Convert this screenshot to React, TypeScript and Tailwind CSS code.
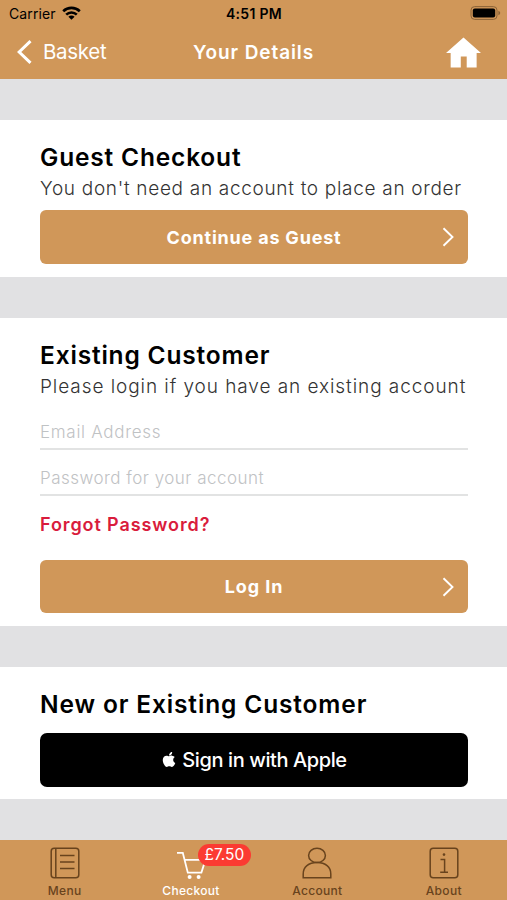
import React from 'react';
import { FaApple } from 'react-icons/fa';

function Chevron() {
  return (
    <svg className="absolute right-[14px] top-[17px] h-5 w-3" viewBox="0 0 12 20" fill="none" stroke="white" strokeWidth="1.9">
      <path d="M1.5 1.2 L10.5 10 L1.5 18.8" />
    </svg>
  );
}

function StatusBar() {
  return (
    <div className="relative flex h-[27px] items-center justify-between pl-[9px] pr-[6px] text-black">
      <div className="flex items-center gap-[6px]">
        <span className="text-[14px] tracking-[0.1px]">Carrier</span>
        <svg className="-mt-[2px] h-[14px] w-[19px]" viewBox="0 0 19 14" fill="none" stroke="black" strokeWidth="2.6">
          <path d="M1.2 5.2 C5.8 0.7 13.2 0.7 17.8 5.2" />
          <path d="M4.2 8.6 C7.2 5.7 11.8 5.7 14.8 8.6" />
          <path d="M9.5 13.8 L6.4 10.7 C8.1 9.1 10.9 9.1 12.6 10.7 Z" fill="black" stroke="none" />
        </svg>
      </div>
      <span className="absolute inset-x-0 pl-px text-center text-[14px] font-semibold tracking-[0.3px]">4:51 PM</span>
      <svg className="-mt-px h-[14px] w-[31px]" viewBox="0 0 31 14">
        <rect x="1" y="0.6" width="26" height="12.8" rx="3.6" fill="none" stroke="#8a6338" strokeWidth="1" />
        <rect x="2.8" y="2.4" width="22.4" height="9.2" rx="2" fill="black" />
        <path d="M28.4 4.8 C30.8 5.6 30.8 8.4 28.4 9.2 Z" fill="#8a6338" />
      </svg>
    </div>
  );
}

function Header() {
  return (
    <header className="h-[79px] shrink-0 bg-[#d09759]">
      <StatusBar />
      <div className="relative flex h-[50px] items-center justify-between pl-4 pr-[26px] text-white">
        <div className="flex items-center gap-[11px]">
          <svg className="h-6 w-4" viewBox="0 0 16 24" fill="none" stroke="white" strokeWidth="3">
            <path d="M14.5 1.2 L3.2 12 L14.5 22.8" />
          </svg>
          <span className="text-[20.5px] tracking-[-0.3px]">Basket</span>
        </div>
        <h1 className="absolute inset-x-0 top-[11px] text-center text-[19px] leading-[30px] font-semibold tracking-[0.9px]">Your Details</h1>
        <svg className="h-[31px] w-[35px]" viewBox="0 0 36 31" fill="white">
          <path d="M18 0 L36 16 H31.5 V31 H21.3 V19.5 H15.2 V31 H4.8 V16 H0 Z" />
        </svg>
      </div>
    </header>
  );
}

function Tab({ label, active, children }: { label: string; active?: boolean; children: React.ReactNode }) {
  return (
    <div className={active ? 'relative flex flex-col items-center text-white' : 'relative flex flex-col items-center text-[#68431d]'}>
      <svg className="mt-[7px] h-8 w-[30px]" viewBox="0 0 30 32" fill="none" stroke="currentColor" strokeWidth="1.5">
        {children}
      </svg>
      <span className="mt-[3px] text-[12px] leading-[18px] font-medium tracking-[0.3px]">{label}</span>
      {active && (
        <span className="absolute left-[70px] top-[4px] flex h-[22px] w-[53px] items-center justify-center rounded-full bg-[#fb3b32] text-[15.5px] text-white">
          £7.50
        </span>
      )}
    </div>
  );
}

export default function App() {
  return (
    <div className="flex h-[900px] w-[507px] flex-col overflow-hidden bg-[#e1e1e3] font-['Inter',sans-serif] whitespace-nowrap">
      <Header />

      <main className="flex flex-1 flex-col gap-[41px] pt-[41px]">
        {/* Guest checkout */}
        <section className="h-[157px] bg-white px-10 pt-[22px]">
          <h2 className="text-[24.5px] leading-[30px] font-semibold tracking-[0.82px]">Guest Checkout</h2>
          <p className="mt-[5px] text-[19px] leading-6 font-light tracking-[0.69px] text-[#333]">You don't need an account to place an order</p>
          <button className="relative mt-[9px] block h-[54px] w-[428px] rounded-[6px] bg-[#d09759] text-[18px] font-bold tracking-[0.8px] text-white">
            Continue as Guest
            <Chevron />
          </button>
        </section>

        {/* Login form */}
        <section className="h-[308px] bg-white px-10 pt-[22px]">
          <h2 className="text-[24.5px] leading-[30px] font-semibold tracking-[0.82px]">Existing Customer</h2>
          <p className="mt-[5px] text-[19px] leading-6 font-light tracking-[0.93px] text-[#333]">Please login if you have an existing account</p>
          <input
            className="mt-[17px] block h-[34px] w-[428px] border-b-2 border-[#e2e3e3] text-[17px] font-light tracking-[0.7px] outline-none placeholder:text-[#bfc2c4]"
            placeholder="Email Address"
          />
          <input
            className="mt-[12px] block h-[34px] w-[428px] border-b-2 border-[#e2e3e3] text-[17px] font-light tracking-[0.48px] outline-none placeholder:text-[#bfc2c4]"
            placeholder="Password for your account"
          />
          <a className="mt-[17px] block text-[18px] leading-6 font-semibold tracking-[0.9px] text-[#d91c3c]">Forgot Password?</a>
          <button className="relative mt-[23px] block h-[53px] w-[428px] rounded-[6px] bg-[#d09759] text-[18px] font-bold tracking-[0.9px] text-white">
            Log In
            <Chevron />
          </button>
        </section>

        {/* Apple sign in */}
        <section className="h-[132px] bg-white px-10 pt-[22px]">
          <h2 className="text-[24.5px] leading-[30px] font-semibold tracking-[0.86px]">New or Existing Customer</h2>
          <button className="mt-[14px] flex h-[54px] w-[428px] items-center justify-center gap-[5px] rounded-[7px] bg-black text-[20px] font-medium tracking-[-0.4px] text-white">
            <FaApple className="-mt-px h-[17px] w-[16px]" />
            Sign in with Apple
          </button>
        </section>
      </main>

      <nav className="grid h-[60px] shrink-0 grid-cols-4 bg-[#d09759] pl-[1.5px]">
        <Tab label="Menu">
          <rect x="1.2" y="1.2" width="27.6" height="29.6" rx="3" />
          <path d="M5.8 1.2 V30.8 M10 8.5 H24.5 M10 15 H24.5 M10 21.5 H24.5" />
        </Tab>
        <Tab label="Checkout" active>
          <path d="M1 5.8 H6.8 L11.8 25.6 H25.4 L29.5 12.8 H8.6" strokeWidth="1.8" />
          <circle cx="13.6" cy="30" r="2" fill="currentColor" stroke="none" />
          <circle cx="22.6" cy="30" r="2" fill="currentColor" stroke="none" />
        </Tab>
        <Tab label="Account">
          <ellipse cx="15" cy="8.4" rx="8.4" ry="7.2" />
          <path d="M1.2 30.8 V27 C1.2 20 6.5 15.6 15 15.6 C23.5 15.6 28.8 20 28.8 27 V30.8 Z" />
        </Tab>
        <Tab label="About">
          <rect x="1.2" y="1.2" width="27.6" height="29.6" rx="3" />
          <path d="M11.5 12.5 H15.6 V25.2 M11.2 25.2 H19" />
          <circle cx="15" cy="7.6" r="1.3" fill="currentColor" stroke="none" />
        </Tab>
      </nav>
    </div>
  );
}
